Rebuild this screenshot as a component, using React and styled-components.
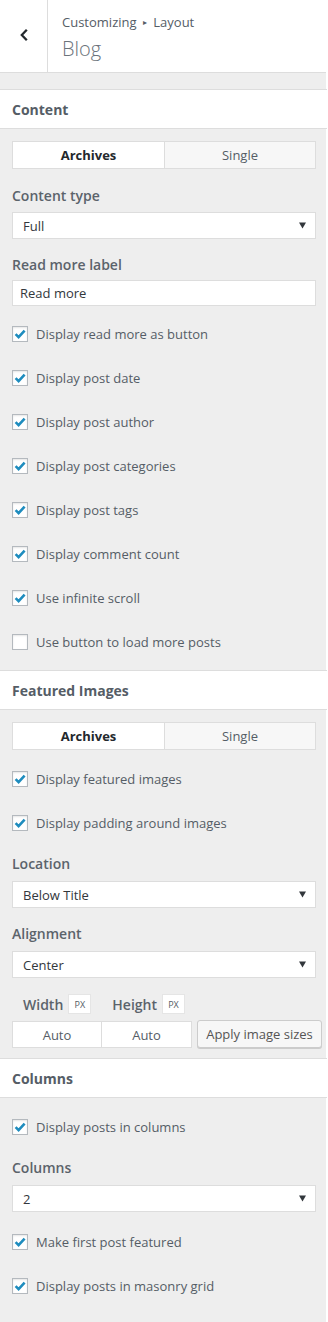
import React from "react";
import styled, { createGlobalStyle } from "styled-components";

const GlobalStyle = createGlobalStyle`
  body {
    margin: 0;
    background: #fff;
    font-family: "Open Sans", "Noto Sans", sans-serif;
    color: #555d66;
  }
  * { box-sizing: border-box; }
`;

const contentChecks = [
  { label: "Display read more as button", checked: true },
  { label: "Display post date", checked: true },
  { label: "Display post author", checked: true },
  { label: "Display post categories", checked: true },
  { label: "Display post tags", checked: true },
  { label: "Display comment count", checked: true },
  { label: "Use infinite scroll", checked: true },
  { label: "Use button to load more posts", checked: false },
];

function CheckRow({ label, checked, mt }) {
  return (
    <Row $mt={mt}>
      <Box>
        {checked && (
          <svg width="14" height="14" viewBox="0 0 14 14">
            <path d="M2.6 7.2 L5.6 10.2 L11.6 3.6" fill="none" stroke="#1e8cbe" strokeWidth="2.6" />
          </svg>
        )}
      </Box>
      <span>{label}</span>
    </Row>
  );
}

function Dropdown({ value, mt }) {
  return (
    <Select $mt={mt}>
      <span>{value}</span>
      <Arrow viewBox="0 0 8 7">
        <path d="M0 0 H8 L4 7 Z" fill="#32373c" />
      </Arrow>
    </Select>
  );
}

function Tabs() {
  return (
    <TabBar>
      <Tab $active>Archives</Tab>
      <Tab>Single</Tab>
    </TabBar>
  );
}

export default function App() {
  return (
    <Panel>
      <GlobalStyle />
      <Header>
        <Back>
          <svg width="12" height="16" viewBox="0 0 12 16">
            <path d="M8.8 2.8 L3.8 8 L8.8 13.2" fill="none" stroke="#23282d" strokeWidth="2.3" />
          </svg>
        </Back>
        <TitleBlock>
          <Crumb>Customizing <small>▸</small> Layout</Crumb>
          <PageTitle>Blog</PageTitle>
        </TitleBlock>
      </Header>
      <Spacer />

      <SectionHeader>Content</SectionHeader>
      <Body $pb={16}>
        <Tabs />
        <Label $mt={15}>Content type</Label>
        <Dropdown value="Full" mt={4} />
        <Label $mt={14}>Read more label</Label>
        <TextInput $mt={3}>Read more</TextInput>
        {contentChecks.map((c, i) => (
          <CheckRow key={c.label} label={c.label} checked={c.checked} mt={i === 0 ? 16 : 20} />
        ))}
      </Body>

      <SectionHeader>Featured Images</SectionHeader>
      <Body $pb={10}>
        <Tabs />
        <CheckRow label="Display featured images" checked mt={17} />
        <CheckRow label="Display padding around images" checked mt={20} />
        <Label $mt={17}>Location</Label>
        <Dropdown value="Below Title" mt={5} />
        <Label $mt={14}>Alignment</Label>
        <Dropdown value="Center" mt={5} />
        <SizeLabels>
          <SizeLabel>Width <Unit>px</Unit></SizeLabel>
          <SizeLabel>Height <Unit>px</Unit></SizeLabel>
        </SizeLabels>
        <SizeInputs>
          <SizeField>Auto</SizeField>
          <SizeField>Auto</SizeField>
          <ApplyButton>Apply image sizes</ApplyButton>
        </SizeInputs>
      </Body>

      <SectionHeader>Columns</SectionHeader>
      <Body $pb={40}>
        <CheckRow label="Display posts in columns" checked mt={5} />
        <Label $mt={17}>Columns</Label>
        <Dropdown value="2" mt={5} />
        <CheckRow label="Make first post featured" checked mt={18} />
        <CheckRow label="Display posts in masonry grid" checked mt={20} />
      </Body>
    </Panel>
  );
}

const Panel = styled.div`
  width: 326px;
  min-height: 1322px;
  background: #eee;
`;

const Header = styled.div`
  display: flex;
  height: 73px;
  background: #fff;
  border-bottom: 1px solid #ddd;
`;

const Back = styled.div`
  width: 48px;
  border-right: 1px solid #ddd;
  display: flex;
  align-items: center;
  justify-content: center;
  padding-bottom: 2px;
`;

const TitleBlock = styled.div`
  display: flex;
  flex-direction: column;
  padding: 12px 0 0 14px;
`;

const Crumb = styled.div`
  font-size: 13px;
  line-height: 20px;
  color: #555d66;
  small {
    font-size: 8px;
    vertical-align: 2px;
    margin: 0 3px;
  }
`;

const PageTitle = styled.div`
  font-size: 20px;
  font-weight: 300;
  line-height: 30px;
  margin-top: 2px;
  color: #6b737b;
`;

const Spacer = styled.div`
  height: 16px;
  background: #eee;
`;

const SectionHeader = styled.div`
  height: 40px;
  display: flex;
  align-items: center;
  padding: 0 12px;
  background: #fff;
  border-top: 1px solid #ddd;
  border-bottom: 1px solid #ddd;
  font-size: 14px;
  font-weight: 700;
  color: #555d66;
  width: 327px;
`;

const Body = styled.div`
  display: flex;
  flex-direction: column;
  padding: 12px 10px ${(p) => p.$pb ?? 15}px 12px;
  background: #eee;
`;

const TabBar = styled.div`
  display: grid;
  grid-template-columns: 1fr 1fr;
  height: 28px;
  border: 1px solid #ddd;
`;

const Tab = styled.div`
  display: flex;
  align-items: center;
  justify-content: center;
  font-size: 13px;
  font-weight: ${(p) => (p.$active ? 700 : 400)};
  color: ${(p) => (p.$active ? "#23282d" : "#555d66")};
  background: ${(p) => (p.$active ? "#fff" : "#f7f7f7")};
  & + & {
    border-left: 1px solid #ddd;
  }
`;

const Label = styled.div`
  margin-top: ${(p) => p.$mt}px;
  font-size: 14px;
  line-height: 24px;
  font-weight: 600;
  color: #5b636b;
`;

const Select = styled.div`
  margin-top: ${(p) => p.$mt}px;
  height: 27px;
  display: flex;
  align-items: center;
  justify-content: space-between;
  padding: 0 9px 0 10px;
  background: #fff;
  border: 1px solid #ddd;
  font-size: 13px;
  color: #32373c;
`;

const Arrow = styled.svg`
  width: 7px;
  height: 7px;
`;

const TextInput = styled.div`
  margin-top: ${(p) => p.$mt}px;
  height: 26px;
  display: flex;
  align-items: center;
  padding: 0 7px;
  background: #fff;
  border: 1px solid #ddd;
  font-size: 13px;
  color: #32373c;
`;

const Row = styled.label`
  margin-top: ${(p) => p.$mt}px;
  display: flex;
  align-items: center;
  gap: 8px;
  height: 24px;
  font-size: 13px;
  color: #555d66;
`;

const Box = styled.span`
  width: 16px;
  height: 16px;
  flex: none;
  display: flex;
  align-items: center;
  justify-content: center;
  background: #fff;
  border: 1px solid #b4b9be;
  box-shadow: inset 0 1px 2px rgba(0, 0, 0, 0.1);
`;

const SizeLabels = styled.div`
  display: flex;
  gap: 21px;
  margin-top: 15px;
  padding-left: 11px;
  height: 22px;
  align-items: center;
`;

const SizeLabel = styled.div`
  display: flex;
  align-items: center;
  gap: 5px;
  font-size: 14px;
  font-weight: 600;
  color: #5b636b;
`;

const Unit = styled.span`
  width: 23px;
  height: 20px;
  display: flex;
  align-items: center;
  justify-content: center;
  background: #fff;
  border: 1px solid #e5e5e5;
  font-size: 9px;
  font-weight: 400;
  text-transform: uppercase;
  color: #555d66;
`;

const SizeInputs = styled.div`
  display: flex;
  margin-top: 6px;
  margin-right: -6px;
  height: 27px;
`;

const SizeField = styled.div`
  width: 90px;
  display: flex;
  align-items: center;
  justify-content: center;
  background: #fff;
  border: 1px solid #ddd;
  font-size: 13px;
  color: #555d66;
  & + & {
    border-left: none;
  }
`;

const ApplyButton = styled.div`
  margin-left: 5px;
  flex: 1;
  display: flex;
  align-items: center;
  justify-content: center;
  background: #f7f7f7;
  border: 1px solid #ccc;
  border-radius: 3px;
  box-shadow: 0 1px 0 #ccc;
  font-size: 13px;
  color: #555;
  margin-top: -1px;
  height: 28px;
`;
